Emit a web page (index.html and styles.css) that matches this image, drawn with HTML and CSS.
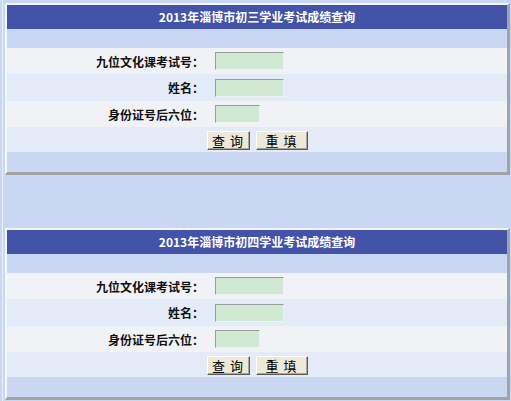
FILE: index.html
```html
<!DOCTYPE html>
<html lang="zh-CN">
<head>
  <meta charset="UTF-8">
  <title>成绩查询</title>
  <link rel="stylesheet" href="styles.css">
</head>
<body>
  <div class="page">

    <!-- 初三 -->
    <div class="panel">
      <div class="panel-title">2013年淄博市初三学业考试成绩查询</div>
      <div class="panel-band"></div>
      <form class="query-form">
        <div class="row row-grey">
          <label class="row-label">九位文化课考试号：</label>
          <input class="field" type="text">
        </div>
        <div class="row row-light">
          <label class="row-label">姓名：</label>
          <input class="field" type="text">
        </div>
        <div class="row row-grey">
          <label class="row-label">身份证号后六位：</label>
          <input class="field field-short" type="text">
        </div>
        <div class="row-buttons row-light">
          <button type="button" class="btn">查 询</button>
          <button type="reset" class="btn btn-wide">重 填</button>
        </div>
      </form>
      <div class="panel-band panel-foot"></div>
    </div>

    <!-- 初四 -->
    <div class="panel panel-next">
      <div class="panel-title">2013年淄博市初四学业考试成绩查询</div>
      <div class="panel-band"></div>
      <form class="query-form">
        <div class="row row-grey">
          <label class="row-label">九位文化课考试号：</label>
          <input class="field" type="text">
        </div>
        <div class="row row-light">
          <label class="row-label">姓名：</label>
          <input class="field" type="text">
        </div>
        <div class="row row-grey">
          <label class="row-label">身份证号后六位：</label>
          <input class="field field-short" type="text">
        </div>
        <div class="row-buttons row-light">
          <button type="button" class="btn">查 询</button>
          <button type="reset" class="btn btn-wide">重 填</button>
        </div>
      </form>
      <div class="panel-band panel-foot"></div>
    </div>

  </div>
</body>
</html>
```

FILE: styles.css
```css
/* base */
html, body {
  margin: 0; padding: 0;
  background: #c9d7f3;
  font-family: "Noto Sans CJK SC", "DejaVu Sans", sans-serif;
  font-size: 12px;
  color: #000;
}

.page {
  margin-left: 2px;
  padding: 3px 0 0 2px;
  border-left: 1px solid #e9eef8;
  min-height: 398px;
}

/* panel */
.panel {
  width: 505px;
  box-sizing: border-box;
  border-style: solid;
  border-width: 2px 3px 3px 2px;
  border-color: #f4f6fb #a3a3a3 #a3a3a3 #f4f6fb;
  background: #c9d7f3;
}
.panel-next { margin-top: 53px; }

.panel-title {
  height: 24px; line-height: 24px;
  background: #4353a7;
  color: #fff;
  font-weight: bold;
  text-align: center;
}
.panel-band { height: 19px; background: #c9d7f3; }
.panel-foot { height: 20px; }

/* form rows */
.query-form { margin: 0; }
.row {
  display: grid;
  grid-template-columns: 197px 1fr;
  column-gap: 11px;
  align-items: center;
  height: 26px;
}
.row:nth-child(2) { height: 27px; }
.row-grey { background: #f1f2f6; }
.row-light { background: #e4ebf8; }

.row-label {
  text-align: right;
  font-weight: bold;
  color: #111;
}

.field {
  width: 69px; height: 18px;
  box-sizing: border-box;
  margin: 0; padding: 0 2px;
  background: #cfe9d3;
  border: 1px solid;
  border-color: #9c9c9c #eef2f0 #eef2f0 #9c9c9c;
  font: inherit;
}
.field-short { width: 45px; }

/* buttons */
.row-buttons {
  height: 25px;
  display: flex; justify-content: center; align-items: center;
  gap: 6px;
  padding-top: 1px;
  box-sizing: border-box;
}
.btn {
  width: 43px; height: 19px;
  box-sizing: border-box;
  padding: 0;
  background: #ece9d8;
  border: 1px solid;
  border-color: #fff #5c5a52 #5c5a52 #fff;
  box-shadow: inset -1px -1px 0 #a9a697;
  font: inherit;
  font-size: 13px;
  letter-spacing: 1px;
  line-height: 17px;
  color: #000;
}
.btn-wide { width: 52px; }
```
